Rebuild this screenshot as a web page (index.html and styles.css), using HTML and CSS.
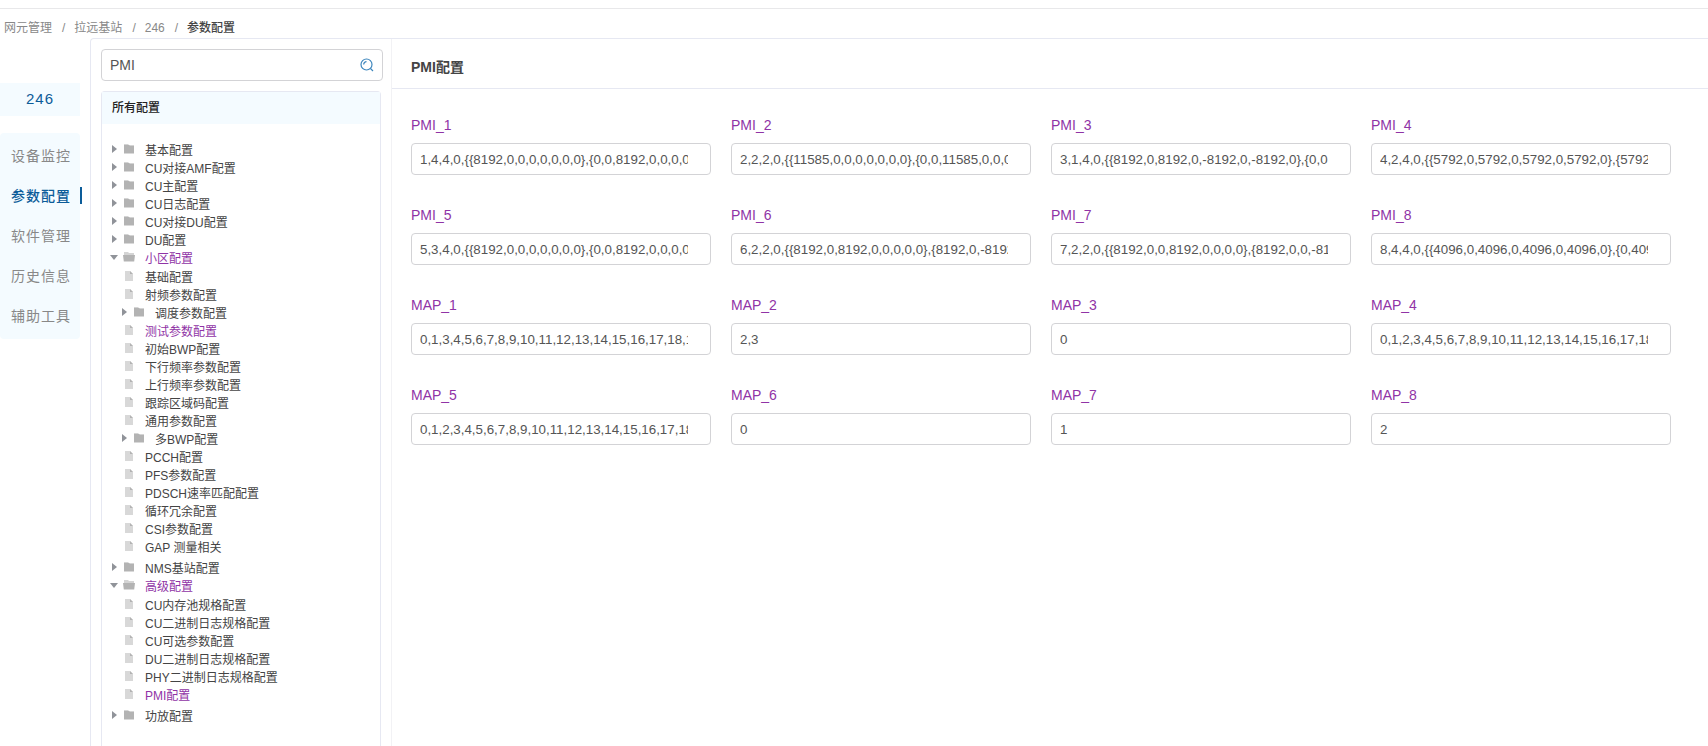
FILE: index.html
```html
<!DOCTYPE html>
<html lang="zh-CN">
<head>
  <meta charset="UTF-8" />
  <meta name="viewport" content="width=device-width, initial-scale=1.0"/>
  <title>参数配置</title>
  <link rel="stylesheet" href="styles.css">
</head>
<body>

  <!-- shared icons -->
  <svg class="sprite" aria-hidden="true">
    <symbol id="icon-folder" viewBox="0 0 12 12">
      <path d="M1 1h4l1 1h5v2H1z" fill="#d4d4d4"/>
      <path d="M1 2h5l1 1h4v7.5H1z" fill="#b3b3b3"/>
    </symbol>
    <symbol id="icon-open" viewBox="0 0 12 12">
      <path d="M1 1h4l1 1h5v3H1z" fill="#d4d4d4"/>
      <path d="M0 4h12l-.8 6.5H.8z" fill="#b3b3b3"/>
    </symbol>
    <symbol id="icon-file" viewBox="0 0 12 12">
      <path d="M2 1h5l3 3v7H2z" fill="#d8d8d8"/>
      <path d="M7 1l3 3H7z" fill="#b3b3b3"/>
    </symbol>
  </svg>

  <div class="topbar"></div>

  <nav class="breadcrumb">
    <a href="#">网元管理</a><span class="sep">/</span>
    <a href="#">拉远基站</a><span class="sep">/</span>
    <a href="#">246</a><span class="sep">/</span>
    <span class="current">参数配置</span>
  </nav>

  <div class="layout">
    <aside class="sidebar">
      <div class="station">246</div>
      <nav class="menu">
        <a href="#">设备监控</a>
        <a href="#" class="active">参数配置</a>
        <a href="#">软件管理</a>
        <a href="#">历史信息</a>
        <a href="#">辅助工具</a>
      </nav>
    </aside>

    <div class="panel">
      <section class="tree-side">
        <div class="search">
          <input type="text" id="search" value="PMI" aria-label="搜索">
          <button type="button" aria-label="搜索">
            <svg width="14" height="14" viewBox="0 0 14 14" fill="none" stroke="#3d86bd" stroke-width="1.2">
              <circle cx="6.5" cy="6.5" r="5.5"/>
              <path d="M3.7 6.5a2.8 2.8 0 0 1 2.8-2.8M10.5 10.5l2.5 2.5"/>
            </svg>
          </button>
        </div>

        <div class="tree-card">
          <h2>所有配置</h2>
          <ul class="tree" id="tree"></ul>
        </div>
      </section>

      <main class="content">
        <h1>PMI配置</h1>
        <form class="fields" id="fields"></form>
      </main>
    </div>
  </div>

  <script>
    const treeData = [
      { name: '基本配置', type: 'folder' },
      { name: 'CU对接AMF配置', type: 'folder' },
      { name: 'CU主配置', type: 'folder' },
      { name: 'CU日志配置', type: 'folder' },
      { name: 'CU对接DU配置', type: 'folder' },
      { name: 'DU配置', type: 'folder' },
      { name: '小区配置', type: 'open', match: true, children: [
        { name: '基础配置' },
        { name: '射频参数配置' },
        { name: '调度参数配置', type: 'folder' },
        { name: '测试参数配置', match: true },
        { name: '初始BWP配置' },
        { name: '下行频率参数配置' },
        { name: '上行频率参数配置' },
        { name: '跟踪区域码配置' },
        { name: '通用参数配置' },
        { name: '多BWP配置', type: 'folder' },
        { name: 'PCCH配置' },
        { name: 'PFS参数配置' },
        { name: 'PDSCH速率匹配配置' },
        { name: '循环冗余配置' },
        { name: 'CSI参数配置' },
        { name: 'GAP 测量相关' }
      ] },
      { name: 'NMS基站配置', type: 'folder' },
      { name: '高级配置', type: 'open', match: true, children: [
        { name: 'CU内存池规格配置' },
        { name: 'CU二进制日志规格配置' },
        { name: 'CU可选参数配置' },
        { name: 'DU二进制日志规格配置' },
        { name: 'PHY二进制日志规格配置' },
        { name: 'PMI配置', match: true }
      ] },
      { name: '功放配置', type: 'folder' }
    ];

    const fieldData = [
      ['PMI_1', '1,4,4,0,{{8192,0,0,0,0,0,0,0},{0,0,8192,0,0,0,0,0}}'],
      ['PMI_2', '2,2,2,0,{{11585,0,0,0,0,0,0,0},{0,0,11585,0,0,0,0,0}}'],
      ['PMI_3', '3,1,4,0,{{8192,0,8192,0,-8192,0,-8192,0},{0,0'],
      ['PMI_4', '4,2,4,0,{{5792,0,5792,0,5792,0,5792,0},{5792,0}}'],
      ['PMI_5', '5,3,4,0,{{8192,0,0,0,0,0,0,0},{0,0,8192,0,0,0,0,0}}'],
      ['PMI_6', '6,2,2,0,{{8192,0,8192,0,0,0,0,0},{8192,0,-8192,0}}'],
      ['PMI_7', '7,2,2,0,{{8192,0,0,8192,0,0,0,0},{8192,0,0,-81'],
      ['PMI_8', '8,4,4,0,{{4096,0,4096,0,4096,0,4096,0},{0,4096,0}}'],
      ['MAP_1', '0,1,3,4,5,6,7,8,9,10,11,12,13,14,15,16,17,18,19,20'],
      ['MAP_2', '2,3'],
      ['MAP_3', '0'],
      ['MAP_4', '0,1,2,3,4,5,6,7,8,9,10,11,12,13,14,15,16,17,18,19,20'],
      ['MAP_5', '0,1,2,3,4,5,6,7,8,9,10,11,12,13,14,15,16,17,18,19,20'],
      ['MAP_6', '0'],
      ['MAP_7', '1'],
      ['MAP_8', '2']
    ];

    function renderNode(node) {
      const type = node.type || 'file';
      const children = node.children
        ? '<ul>' + node.children.map(renderNode).join('') + '</ul>'
        : '';
      return `<li>
        <div class="node ${type}${node.match ? ' match' : ''}">
          <span class="arrow"></span>
          <svg class="icon"><use href="#icon-${type}"/></svg>
          <a href="#">${node.name}</a>
        </div>${children}
      </li>`;
    }

    document.getElementById('tree').innerHTML = treeData.map(renderNode).join('');

    document.getElementById('fields').innerHTML = fieldData.map(([name, value]) => `
      <div class="field">
        <label for="${name}">${name}</label>
        <input type="text" id="${name}" value="${value}">
      </div>`).join('');
  </script>

</body>
</html>
```
FILE: styles.css
```css
* {
  box-sizing: border-box;
}

body {
  margin: 0;
  min-height: 100vh;
  display: flex;
  flex-direction: column;
  font-family: 'Liberation Sans', Arial, 'Noto Sans CJK SC', sans-serif;
  font-size: 12px;
  color: #444;
  background: #fff;
}

a {
  color: inherit;
  text-decoration: none;
}

ul {
  list-style: none;
  margin: 0;
  padding: 0;
}

.sprite {
  position: absolute;
  width: 0;
  height: 0;
}

.topbar {
  height: 9px;
  border-bottom: 1px solid #e8e8ea;
}

/* breadcrumb */
.breadcrumb {
  display: flex;
  height: 29px;
  padding: 10px 4px 0;
  line-height: 18px;
  color: #888;
}

.breadcrumb .sep {
  margin: 0 9px 0 10px;
}

.breadcrumb .current {
  color: #444;
  font-weight: 500;
}

.layout {
  flex: 1;
  display: flex;
  gap: 10px;
}

/* left menu */
.sidebar {
  flex: none;
  width: 80px;
  padding-top: 45px;
  font-size: 14px;
  letter-spacing: 1px;
}

.station {
  height: 33px;
  line-height: 32px;
  text-align: center;
  font-size: 15px;
  color: #0c5c99;
  background: #f4fbff;
}

.menu {
  margin-top: 17px;
  padding: 3px 0;
  border-radius: 4px;
  background: #f4fbff;
}

.menu a {
  display: block;
  position: relative;
  padding-left: 11px;
  line-height: 40px;
  color: #888;
}

.menu a.active {
  color: #0c5c99;
  font-weight: 500;
}

.menu a.active::after {
  content: '';
  position: absolute;
  left: 100%;
  top: 11px;
  width: 2px;
  height: 17px;
  background: #0c5c99;
}

/* main panel */
.panel {
  flex: 1;
  display: flex;
  min-width: 0;
  border: 1px solid #e6e8f2;
  border-right: 0;
  border-bottom: 0;
  border-radius: 4px 0 0 0;
}

.tree-side {
  flex: none;
  display: flex;
  flex-direction: column;
  width: 300px;
  padding: 10px 8px 0 10px;
}

.search {
  display: flex;
  align-items: center;
  height: 32px;
  border: 1px solid #d3d3d6;
  border-radius: 4px;
}

.search input {
  flex: 1;
  min-width: 0;
  padding: 0 8px;
  border: 0;
  outline: none;
  background: none;
  font-family: inherit;
  font-size: 14px;
  color: #555;
}

.search button {
  display: flex;
  padding: 0 8px;
  border: 0;
  background: none;
  cursor: pointer;
}

.tree-card {
  flex: 1;
  margin: 10px 2px 0 0;
  border: 1px solid #e6e8f2;
  border-bottom: 0;
  border-radius: 4px 4px 0 0;
}

.tree-card h2 {
  margin: 0;
  padding-left: 10px;
  line-height: 32px;
  font-size: 12px;
  font-weight: 500;
  color: #222;
  background: #f4fbff;
}

.tree {
  padding: 16px 0 20px 8px;
}

.tree ul {
  padding: 1px 0 3px;
}

.node {
  display: flex;
  align-items: center;
  height: 18px;
  white-space: nowrap;
}

.tree ul .folder {
  padding-left: 10px;
}

.arrow {
  width: 8px;
  margin-right: 5px;
}

.arrow::before {
  content: '';
  display: block;
  width: 0;
  margin-left: 2px;
  border: 4px solid transparent;
  border-left: 5px solid #909399;
  border-right: 0;
}

.open .arrow::before {
  margin-left: 0;
  border: 4px solid transparent;
  border-top: 5px solid #909399;
  border-bottom: 0;
}

.file .arrow::before {
  display: none;
}

.icon {
  width: 12px;
  height: 12px;
  margin-right: 10px;
}

.match {
  color: #9033a6;
}

/* form */
.content {
  flex: 1;
  min-width: 0;
  border-left: 1px solid #f2f2f5;
}

.content h1 {
  margin: 0;
  padding: 8px 0 0 19px;
  line-height: 41px;
  border-bottom: 1px solid #e6e8f2;
  font-size: 14px;
  font-weight: bold;
  color: #444;
}

.fields {
  display: grid;
  grid-template-columns: repeat(4, 1fr);
  gap: 30px 20px;
  padding: 26px 37px 26px 19px;
}

.field {
  display: flex;
  flex-direction: column;
}

.field label {
  height: 28px;
  line-height: 20px;
  font-size: 14px;
  color: #9033a6;
}

.field input {
  width: 100%;
  height: 32px;
  padding: 0 22px 0 8px;
  border: 1px solid #d3d3d6;
  border-radius: 4px;
  outline: none;
  font-family: inherit;
  color: #555;
}
```
